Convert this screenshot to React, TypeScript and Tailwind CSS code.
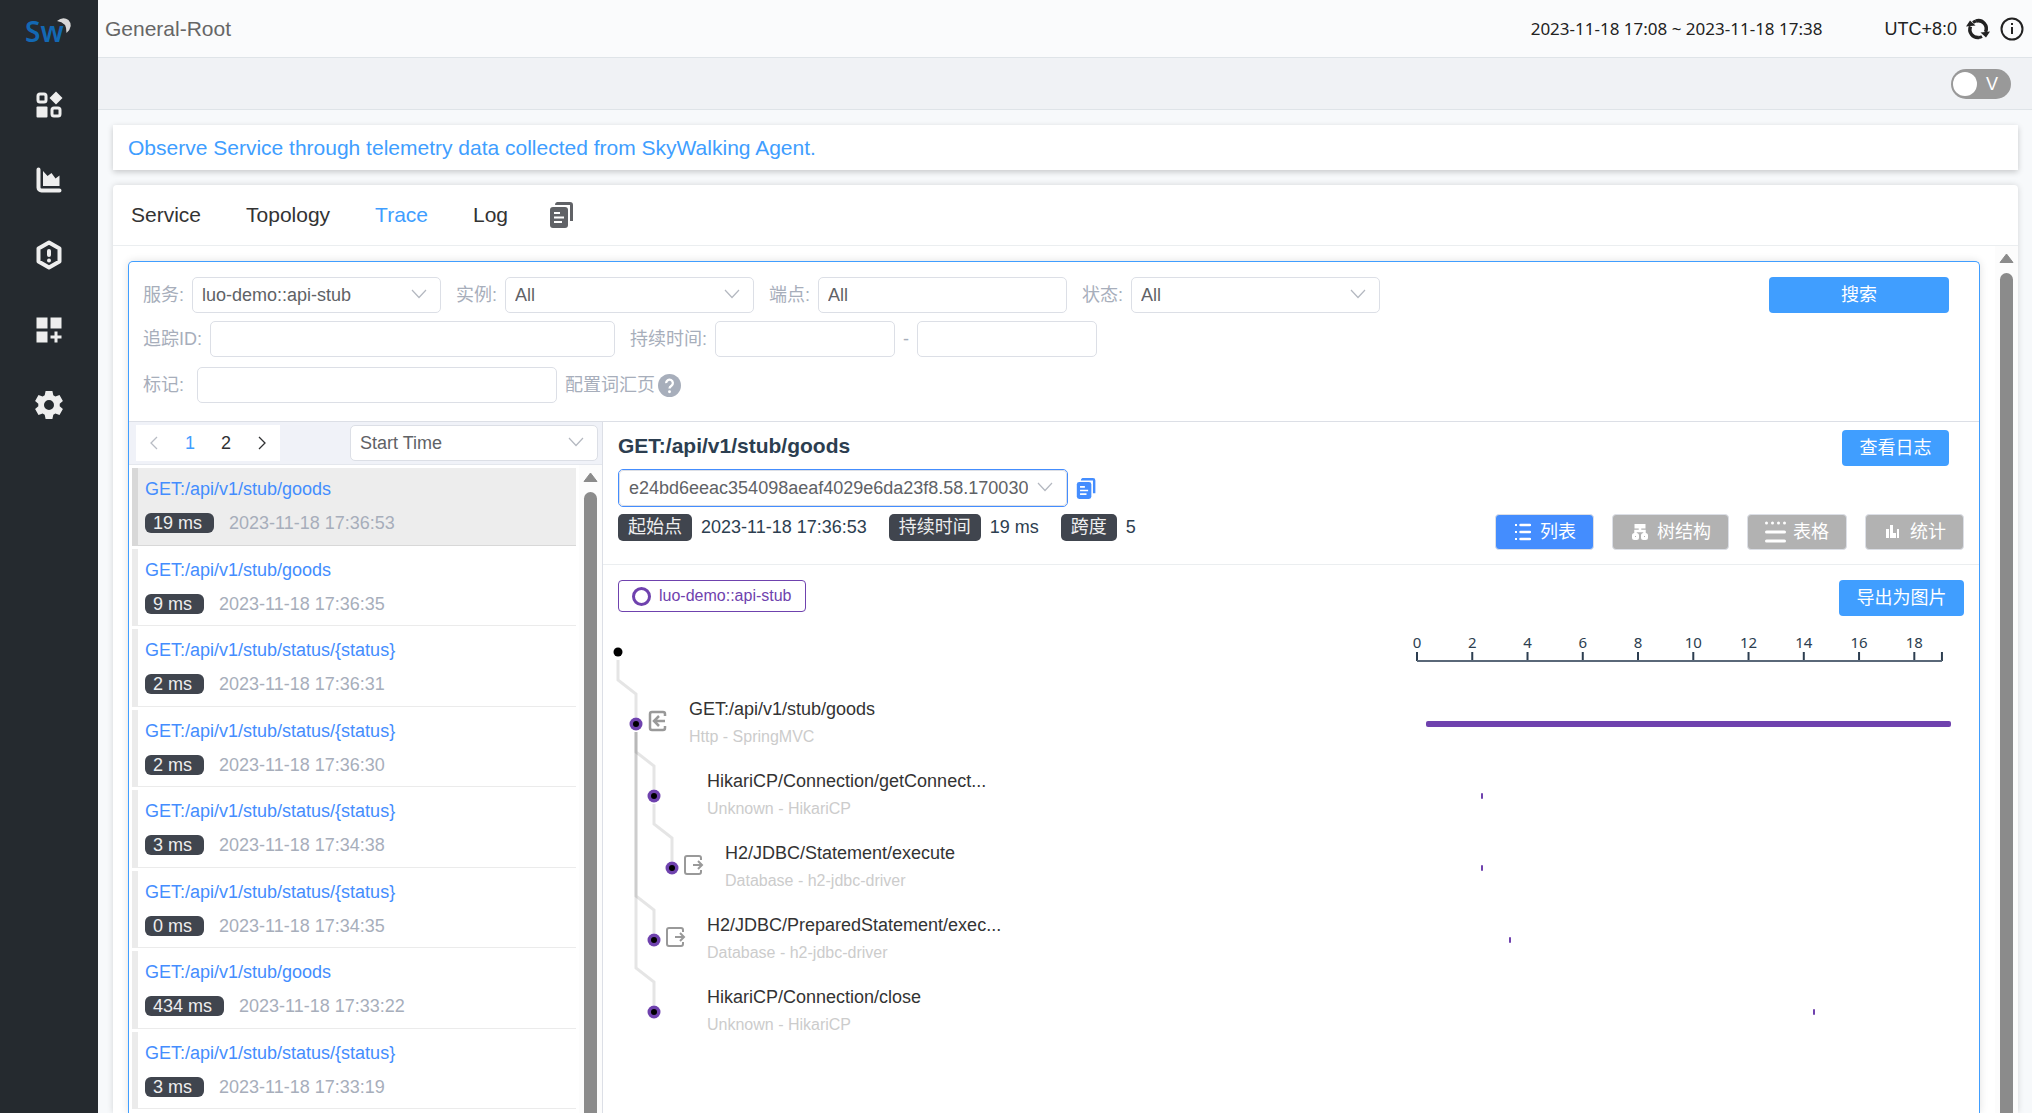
import { useState, type ReactNode } from "react";
import clsx from "clsx";

interface Trace {
  id: number;
  endpoint: string;
  duration: number;
  time: string;
}

interface Span {
  id: number;
  parent: number;
  depth: number;
  label: string;
  layer: string;
  start: number;
  length: number;
  kind?: "entry" | "exit";
}

const TRACES: Trace[] = [
  { id: 1, endpoint: "GET:/api/v1/stub/goods", duration: 19, time: "2023-11-18 17:36:53" },
  { id: 2, endpoint: "GET:/api/v1/stub/goods", duration: 9, time: "2023-11-18 17:36:35" },
  { id: 3, endpoint: "GET:/api/v1/stub/status/{status}", duration: 2, time: "2023-11-18 17:36:31" },
  { id: 4, endpoint: "GET:/api/v1/stub/status/{status}", duration: 2, time: "2023-11-18 17:36:30" },
  { id: 5, endpoint: "GET:/api/v1/stub/status/{status}", duration: 3, time: "2023-11-18 17:34:38" },
  { id: 6, endpoint: "GET:/api/v1/stub/status/{status}", duration: 0, time: "2023-11-18 17:34:35" },
  { id: 7, endpoint: "GET:/api/v1/stub/goods", duration: 434, time: "2023-11-18 17:33:22" },
  { id: 8, endpoint: "GET:/api/v1/stub/status/{status}", duration: 3, time: "2023-11-18 17:33:19" },
];

// parent is the row index of the parent span, 0 is the root dot
const SPANS: Span[] = [
  { id: 1, parent: 0, depth: 1, label: "GET:/api/v1/stub/goods", layer: "Http - SpringMVC", start: 0, length: 19, kind: "entry" },
  { id: 2, parent: 1, depth: 2, label: "HikariCP/Connection/getConnect...", layer: "Unknown - HikariCP", start: 2, length: 0 },
  { id: 3, parent: 2, depth: 3, label: "H2/JDBC/Statement/execute", layer: "Database - h2-jdbc-driver", start: 2, length: 0, kind: "exit" },
  { id: 4, parent: 1, depth: 2, label: "H2/JDBC/PreparedStatement/exec...", layer: "Database - h2-jdbc-driver", start: 3, length: 0, kind: "exit" },
  { id: 5, parent: 1, depth: 2, label: "HikariCP/Connection/close", layer: "Unknown - HikariCP", start: 14, length: 0 },
];

const TOTAL = 19;
const TICKS = [0, 2, 4, 6, 8, 10, 12, 14, 16, 18];
const TABS = ["Service", "Topology", "Trace", "Log"];
const ROW = 72;

export default function App() {
  return (
    <div className="flex h-screen overflow-hidden bg-[#f7f9fb] font-['Liberation_Sans','Noto_Sans_CJK_SC',sans-serif] text-[18px] leading-6 text-[#2c3e50]">
      <Sidebar />
      <div className="flex min-w-0 flex-1 flex-col">
        <Header />
        <div className="flex h-[52px] shrink-0 items-center justify-end border-b border-[#dfe4e8] bg-[#f0f2f5] pr-[21px]">
          <button
            role="switch"
            aria-checked="false"
            aria-label="Edit mode"
            className="flex h-[30px] w-[60px] items-center gap-[9px] rounded-full bg-[#999] pl-[2px] text-white"
          >
            <span className="h-6 w-6 rounded-full bg-white" />V
          </button>
        </div>
        <main className="flex min-h-0 flex-1 flex-col gap-[15px] pt-[15px] pr-[14px] pl-[15px]">
          <div className="flex h-[45px] shrink-0 items-center bg-white px-[15px] text-[21px] text-[#409eff] shadow-[0_2px_6px_#00000033]">
            Observe Service through telemetry data collected from SkyWalking Agent.
          </div>
          <div className="flex min-h-0 flex-1 flex-col rounded-t-[4px] bg-white shadow-[0_0_6px_#00000026]">
            <TabBar />
            <div className="flex min-h-0 flex-1">
              <div className="min-w-0 flex-1 overflow-hidden px-[15px] pt-[15px]">
                <div className="flex h-full flex-col rounded-t-[5px] border border-b-0 border-[#409eff] shadow-[0_0_8px_#0000001f]">
                  <Filters />
                  <div className="flex min-h-0 flex-1">
                    <TraceList />
                    <TraceDetail />
                  </div>
                </div>
              </div>
              <ScrollBar />
            </div>
          </div>
        </main>
      </div>
    </div>
  );
}

function Sidebar() {
  return (
    <nav className="flex w-[98px] shrink-0 flex-col items-center bg-[#252a2f] text-[#eee]">
      <a href="#home" aria-label="SkyWalking" className="mt-[10px] h-10">
        <svg width="50" height="40" viewBox="0 0 50 40" className="overflow-visible">
          <text x="1" y="32" fontFamily="Noto Sans" fontWeight="600" fontSize="28" fill="#1368b3">
            Sw
          </text>
          <path d="M33 11Q39 6 44.500 10Q50 16 42.500 23Q43 12 33 11z" fill="#d8d8d8" />
        </svg>
      </a>
      <div className="mt-[37px] flex flex-col gap-[39px]">
        <NavItem label="Dashboards">
          <rect x="7" y="7" width="8" height="8" rx="2" fill="none" stroke="currentColor" strokeWidth="3" />
          <rect x="21" y="21" width="8" height="8" rx="2" fill="none" stroke="currentColor" strokeWidth="3" />
          <rect x="5.500" y="19.500" width="11" height="11" rx="1" />
          <path d="M25 4.500l6.500 6.500-6.500 6.500-6.500-6.500z" />
        </NavItem>
        <NavItem label="Charts">
          <path
            d="M7.500 7.500v18a3 3 0 0 0 3 3h18"
            fill="none"
            stroke="currentColor"
            strokeWidth="4"
            strokeLinecap="round"
          />
          <path d="M12 24V9l4.500 5 4-3 4 5.500 4-3V24z" />
        </NavItem>
        <NavItem label="Alarms">
          <path
            d="M18 5.500l10.500 6v13L18 30.500l-10.500-6v-13z"
            fill="none"
            stroke="currentColor"
            strokeWidth="4"
            strokeLinejoin="round"
          />
          <rect x="16" y="12" width="4" height="8" rx="2" />
          <circle cx="18" cy="23.500" r="2" />
        </NavItem>
        <NavItem label="New dashboard">
          <path d="M5.500 5.500h11v11h-11zM19.500 5.500h11v11h-11zM5.500 19.500h11v11h-11zM23.500 19.500h3v4h4v3h-4v4h-3v-4h-4v-3h4z" />
        </NavItem>
        <NavItem label="Settings">
          <path
            fillRule="evenodd"
            d="M14.600 4h6.800l.9 4.200 2.100 1.200 4.100-1.300 3.400 5.800-3.200 2.900v2.400l3.200 2.900-3.400 5.800-4.100-1.300-2.100 1.200-.9 4.200h-6.800l-.9-4.200-2.100-1.200-4.100 1.300-3.400-5.800 3.200-2.900v-2.400l-3.200-2.900 3.400-5.800 4.100 1.300 2.100-1.200zM18 13a5 5 0 1 0 0 10 5 5 0 0 0 0-10z"
          />
        </NavItem>
      </div>
    </nav>
  );
}

function NavItem({ label, children }: { label: string; children: ReactNode }) {
  return (
    <a href="#nav" aria-label={label}>
      <svg width="36" height="36" viewBox="0 0 36 36" fill="currentColor">
        {children}
      </svg>
    </a>
  );
}

function Header() {
  return (
    <header className="flex h-[58px] shrink-0 items-center border-b border-[#dfe4e8] bg-[#fafbfc] pr-2 pl-[7px] text-[#222]">
      <h1 className="flex-1 text-[21px] text-[#666]">General-Root</h1>
      <button className="font-['Noto_Sans','Noto_Sans_CJK_SC',sans-serif] text-[17px]">
        2023-11-18 17:08 ~ 2023-11-18 17:38
      </button>
      <span className="ml-[62px]">UTC+8:0</span>
      <button aria-label="Refresh" className="ml-[9px]">
        <svg width="24" height="24" viewBox="0 0 24 24" fill="currentColor">
          <path
            d="M4.500 9.500A8 8 0 0 0 13 20.500M10 4a8 8 0 0 1 9.500 11"
            fill="none"
            stroke="currentColor"
            strokeWidth="3.500"
          />
          <path
            d="M13 20.500a9 9 0 0 0 3-1M7 5.500a9 9 0 0 1 3-1.500"
            fill="none"
            stroke="currentColor"
            strokeWidth="3"
          />
          <path d="M0 9.500l4-6 5.500 5zM24 14.500l-4 6-5.500-5z" />
        </svg>
      </button>
      <button aria-label="Version" className="ml-[10px]">
        <svg width="24" height="24" viewBox="0 0 24 24" fill="currentColor">
          <circle cx="12" cy="12" r="10.500" fill="none" stroke="currentColor" strokeWidth="2" />
          <path d="M11 10h2v7h-2zM11 6h2v2h-2z" />
        </svg>
      </button>
    </header>
  );
}

function TabBar() {
  const [active, setActive] = useState("Trace");
  return (
    <div className="flex h-[61px] shrink-0 items-center gap-[45px] border-b border-[#ebeef0] pl-[18px] text-[21px] text-[#333]">
      {TABS.map((tab) => (
        <button
          key={tab}
          onClick={() => setActive(tab)}
          className={clsx(tab === active && "text-[#409eff]")}
        >
          {tab}
        </button>
      ))}
      <button aria-label="Copy tabs" className="-ml-1 text-[#606266]">
        <CopyIcon size={26} />
      </button>
    </div>
  );
}

function Filters() {
  return (
    <form className="flex shrink-0 items-start justify-between border-b border-[#dcdfe6] pt-[15px] pr-[30px] pb-[18px] pl-[14px] text-[#a7aebb]">
      <div className="flex flex-col">
        <div className="flex gap-[15px]">
          <Field label="服务:">
            <Select label="服务" value="luo-demo::api-stub" />
          </Field>
          <Field label="实例:">
            <Select label="实例" value="All" />
          </Field>
          <Field label="端点:">
            <TextInput label="端点" value="All" className="w-[249px]" />
          </Field>
          <Field label="状态:">
            <Select label="状态" value="All" />
          </Field>
        </div>
        <div className="mt-2 flex gap-[15px]">
          <Field label="追踪ID:">
            <TextInput label="追踪ID" className="w-[405px]" />
          </Field>
          <Field label="持续时间:">
            <TextInput label="最小持续时间" className="w-[180px]" />
            <span>-</span>
            <TextInput label="最大持续时间" className="w-[180px]" />
          </Field>
        </div>
        <div className="mt-[10px] flex items-center">
          <label htmlFor="tag-input">标记:</label>
          <input
            id="tag-input"
            className="ml-[13px] h-9 w-[360px] rounded-[5px] border border-[#dcdfe6] px-[9px] outline-none"
          />
          <a href="#vocabulary" className="ml-2 flex items-center gap-[3px]">
            配置词汇页
            <svg width="23" height="23" viewBox="0 0 24 24">
              <circle cx="12" cy="12" r="12" fill="#a7aebb" />
              <path
                d="M8.500 9.500a3.500 3.500 0 1 1 5.500 2.800c-1.300.9-2 1.500-2 2.900"
                fill="none"
                stroke="#fff"
                strokeWidth="2.400"
              />
              <circle cx="12" cy="18.500" r="1.500" fill="#fff" />
            </svg>
          </a>
        </div>
      </div>
      <button type="button" className="h-9 w-[180px] rounded-[4px] bg-[#409eff] text-white">
        搜索
      </button>
    </form>
  );
}

function Field({ label, children }: { label: string; children: ReactNode }) {
  return (
    <div className="flex items-center gap-2">
      <span>{label}</span>
      {children}
    </div>
  );
}

function TextInput({
  label,
  value,
  className,
}: {
  label: string;
  value?: string;
  className: string;
}) {
  return (
    <input
      aria-label={label}
      defaultValue={value}
      className={clsx(
        "h-9 rounded-[5px] border border-[#dcdfe6] bg-white px-[9px] text-[#606266] outline-none",
        className
      )}
    />
  );
}

function Select({ label, value, className }: { label: string; value: string; className?: string }) {
  return (
    <div className={clsx("relative h-9", className ?? "w-[249px]")}>
      <select
        aria-label={label}
        className="h-full w-full appearance-none rounded-[5px] border border-[#dcdfe6] bg-white pr-9 pl-[9px] text-[#606266] outline-none"
      >
        <option>{value}</option>
      </select>
      <Chevron />
    </div>
  );
}

function Chevron() {
  return (
    <svg
      width="16"
      height="10"
      viewBox="0 0 16 10"
      className="pointer-events-none absolute top-3 right-[14px]"
    >
      <path d="M1 1l7 7.500L15 1" fill="none" stroke="#b4b8c0" strokeWidth="1.200" />
    </svg>
  );
}

function TraceList() {
  const [selected, setSelected] = useState(1);
  return (
    <section className="flex w-[474px] shrink-0 flex-col border-r border-[#dcdfe6]">
      <div className="flex h-[43px] shrink-0 items-start justify-between border-b border-[#e4e7ed] bg-[#f0f2f8] pt-[3px] pr-[4px] pl-[7px]">
        <div className="flex h-9 bg-white text-[#303133]">
          <button aria-label="Previous page" disabled className="flex w-9 items-center justify-center text-[#b8bcc4]">
            <PageArrow d="M8 1L2 7l6 6" />
          </button>
          <button className="w-9 text-[#409eff]">1</button>
          <button className="w-9">2</button>
          <button aria-label="Next page" className="flex w-9 items-center justify-center">
            <PageArrow d="M2 1l6 6-6 6" />
          </button>
        </div>
        <Select label="排序" value="Start Time" className="w-[248px]" />
      </div>
      <div className="flex min-h-0 flex-1">
        <ul className="flex min-w-0 flex-1 flex-col gap-[3px] overflow-hidden pt-[3px] pl-[3px]">
          {TRACES.map((trace) => (
            <li
              key={trace.id}
              onClick={() => setSelected(trace.id)}
              className={clsx(
                "shrink-0 border-b border-l-[6px] pt-[9px] pl-[7px] odd:h-[78px] even:h-[77px]",
                trace.id === selected
                  ? "border-b-[#d8d8d8] border-l-[#d8d8d8] bg-[#ededed]"
                  : "border-b-[#ebebeb] border-l-[#ebebeb]"
              )}
            >
              <a href="#trace" className="block text-[#448dfe]">
                {trace.endpoint}
              </a>
              <div className="mt-3 flex gap-[15px] leading-5">
                <span className="rounded-[6px] bg-[#40454e] pr-3 pl-2 text-[#eee]">
                  {trace.duration} ms
                </span>
                <span className="text-[#a7aebb]">{trace.time}</span>
              </div>
            </li>
          ))}
        </ul>
        <div className="ml-[3px]">
          <ScrollBar />
        </div>
      </div>
    </section>
  );
}

function PageArrow({ d }: { d: string }) {
  return (
    <svg width="10" height="14" viewBox="0 0 10 14">
      <path d={d} fill="none" stroke="currentColor" strokeWidth="1.300" />
    </svg>
  );
}

function ScrollBar() {
  return (
    <div className="flex h-full w-[23px] flex-col items-center bg-[#fcfcfc] pt-[7px]" aria-hidden="true">
      <svg width="15" height="10" viewBox="0 0 15 10">
        <path d="M7.500 1L14 9.500H1z" fill="#8b8b8b" stroke="#8b8b8b" strokeLinejoin="round" />
      </svg>
      <div className="mt-[10px] w-[13px] flex-1 rounded-t-full bg-[#8b8b8b]" />
    </div>
  );
}

function TraceDetail() {
  return (
    <section className="flex min-w-0 flex-1 flex-col">
      <div className="shrink-0 border-b border-[#ebeef0] px-[15px] pt-2 pb-[14px]">
        <div className="flex items-start justify-between pr-[15px]">
          <h2 className="text-[21px] leading-8 font-bold">GET:/api/v1/stub/goods</h2>
          <button className="h-9 w-[107px] rounded-[4px] bg-[#409eff] text-white">查看日志</button>
        </div>
        <div className="mt-[3px] flex items-center gap-2">
          <div className="relative h-[38px] w-[450px] rounded-[5px] border border-[#448dfe]">
            <select
              aria-label="追踪ID"
              className="h-full w-full appearance-none rounded-[4px] border border-[#dcdfe6] bg-white pr-[38px] pl-[9px] text-[#606266] outline-none"
            >
              <option>e24bd6eeac354098aeaf4029e6da23f8.58.170030</option>
            </select>
            <Chevron />
          </div>
          <button aria-label="Copy trace id" className="text-[#448dfe]">
            <CopyIcon size={21} />
          </button>
        </div>
        <div className="mt-[7px] flex items-start justify-between">
          <dl className="flex leading-[27px]">
            <Stat label="起始点" value="2023-11-18 17:36:53" />
            <Stat label="持续时间" value="19 ms" />
            <Stat label="跨度" value="5" />
          </dl>
          <ViewSwitch />
        </div>
      </div>
      <div className="px-[15px] pt-[15px]">
        <div className="flex items-start justify-between">
          <span className="flex h-8 items-center gap-2 rounded-[4px] border border-[#6f42ae] px-[13px] text-[16px] text-[#6f42ae]">
            <span className="h-[19px] w-[19px] rounded-full border-[3px] border-[#6f42ae]" />
            luo-demo::api-stub
          </span>
          <button className="h-9 w-[125px] rounded-[4px] bg-[#409eff] text-white">导出为图片</button>
        </div>
        <SpanTree />
      </div>
    </section>
  );
}

function Stat({ label, value }: { label: string; value: string }) {
  return (
    <div className="mr-[22px] flex gap-[9px]">
      <dt className="rounded-[5px] bg-[#40454e] px-[10px] text-[#eee]">{label}</dt>
      <dd>{value}</dd>
    </div>
  );
}

const VIEWS = [
  {
    name: "列表",
    icon: (
      <svg width="16" height="18" viewBox="0 0 16 18" fill="currentColor">
        <path d="M0 1h2v2H0zM0 8h2v2H0zM0 15h2v2H0z" />
        <path d="M5.500 2H15M5.500 9H15M5.500 16H15" stroke="currentColor" strokeWidth="2.500" strokeLinecap="round" />
      </svg>
    ),
  },
  {
    name: "树结构",
    icon: (
      <svg width="16" height="18" viewBox="0 0 16 18">
        <path d="M2.500 1h11v4.500h-11z" fill="currentColor" />
        <path d="M8 5v4M3.500 11V8h9v3" fill="none" stroke="currentColor" strokeWidth="2.500" />
        <rect x="1.500" y="11.500" width="4" height="4" rx="1" fill="none" stroke="currentColor" strokeWidth="3" />
        <rect x="10.500" y="11.500" width="4" height="4" rx="1" fill="none" stroke="currentColor" strokeWidth="3" />
      </svg>
    ),
  },
  {
    name: "表格",
    icon: (
      <svg width="21" height="22" viewBox="0 0 21 22" fill="currentColor">
        <circle cx="1.500" cy="2" r="1.500" />
        <circle cx="7.500" cy="2" r="1.500" />
        <circle cx="13.500" cy="2" r="1.500" />
        <circle cx="19.500" cy="2" r="1.500" />
        <path d="M1.500 11h18M1.500 20h18" stroke="currentColor" strokeWidth="3" strokeLinecap="round" />
      </svg>
    ),
  },
  {
    name: "统计",
    icon: (
      <svg width="16" height="18" viewBox="0 0 16 18" fill="currentColor">
        <path d="M1 6h3v9H1zM5 2h3v13H5zM8 10h3v5H8zM12 6h2v9h-2z" />
      </svg>
    ),
  },
];

function ViewSwitch() {
  const [view, setView] = useState("列表");
  return (
    <div className="flex gap-[18px]">
      {VIEWS.map(({ name, icon }) => (
        <button
          key={name}
          onClick={() => setView(name)}
          className={clsx(
            "flex h-9 items-center rounded-[4px] border border-[#dcdfe6] pr-[17px] text-white",
            name === "表格" ? "gap-[7px] pl-[17px]" : "gap-[9px] pl-[19px]",
            name === view ? "bg-[#448dfe]" : "bg-[#b2b2b2]"
          )}
        >
          {icon}
          {name}
        </button>
      ))}
    </div>
  );
}

function SpanTree() {
  return (
    <div className="relative">
      <TreeLines />
      <div className="flex h-[72px] justify-end">
        <TimeAxis />
      </div>
      {SPANS.map((span) => (
        <SpanRow key={span.id} span={span} />
      ))}
    </div>
  );
}

// Dots and elbow connectors, one 18px indent per depth level
function TreeLines() {
  const nodeX = (depth: number) => 8 + depth * 18;
  const nodeY = (row: number) => ROW / 2 + row * ROW;
  const depthOf = (row: number) => (row === 0 ? 0 : SPANS[row - 1].depth);

  return (
    <svg width="110" height="432" viewBox="0 0 110 432" className="absolute top-0 -left-2">
      {SPANS.map((span) => {
        const px = nodeX(depthOf(span.parent));
        const x = nodeX(span.depth);
        const y = nodeY(span.id);
        return (
          <path
            key={span.id}
            d={`M${px} ${nodeY(span.parent) + 8}V${y - 44}L${x} ${y - 30}V${y - 7}`}
            fill="none"
            stroke="#000"
            strokeOpacity="0.1"
            strokeWidth="3"
          />
        );
      })}
      <circle cx={nodeX(0)} cy={nodeY(0)} r="4.500" />
      {SPANS.map((span) => (
        <g key={span.id}>
          <circle cx={nodeX(span.depth)} cy={nodeY(span.id)} r="6.500" fill="#6f42ae" />
          <circle cx={nodeX(span.depth)} cy={nodeY(span.id)} r="3" />
          {span.kind && (
            <g
              transform={`translate(${nodeX(span.depth) + 12} ${nodeY(span.id) - 13})`}
              fill="none"
              stroke="#999"
              strokeWidth="2"
            >
              {span.kind === "entry" ? (
                <path
                  d="M17 5V3q0-2-2-2H4Q2 1 2 3v14q0 2 2 2h11q2 0 2-2v-2M17 10H7M11 5l-5 5 5 5"
                  strokeWidth="2.500"
                />
              ) : (
                <path d="M17 5V3q0-2-2-2H3Q1 1 1 3v14q0 2 2 2h12q2 0 2-2v-2M9 10h9M14 6l4 4-4 4" />
              )}
            </g>
          )}
        </g>
      ))}
    </svg>
  );
}

function TimeAxis() {
  return (
    <svg width="39%" height="72" className="mr-[22px] overflow-visible" fill="#2c3e50">
      {TICKS.map((tick) => (
        <text
          key={tick}
          x={`${(tick / TOTAL) * 100}%`}
          y="32"
          textAnchor="middle"
          fontSize="15"
          fontFamily="Noto Sans"
        >
          {tick}
        </text>
      ))}
      {[...TICKS, TOTAL].map((tick) => {
        const x = `${(tick / TOTAL) * 100}%`;
        return <line key={tick} x1={x} x2={x} y1="36" y2="45" stroke="#2c3e50" strokeWidth="2" />;
      })}
      <line x1="0" x2="100%" y1="45" y2="45" stroke="#5a6878" strokeWidth="2" />
    </svg>
  );
}

function SpanRow({ span }: { span: Span }) {
  return (
    <div className="flex h-[72px] justify-between">
      <div className="pt-[9px]" style={{ paddingLeft: 53 + span.depth * 18 }}>
        <div className="text-[#333]">{span.label}</div>
        <div className="mt-[6px] text-[16px] leading-5 text-[#ccc]">{span.layer}</div>
      </div>
      <div className="mr-[13px] flex w-[39%] items-center">
        <div
          className="h-[6px] min-w-[2px] rounded-[2px] bg-[#6f42ae]"
          style={{
            marginLeft: `${(span.start / TOTAL) * 100}%`,
            width: `${(span.length / TOTAL) * 100}%`,
          }}
        />
      </div>
    </div>
  );
}

function CopyIcon({ size }: { size: number }) {
  return (
    <svg width={size} height={size} viewBox="0 0 26 26" fill="currentColor">
      <path d="M8 0h13a3 3 0 0 1 3 3v16h-3V3H6a3 3 0 0 1 2-3z" />
      <rect x="1" y="5" width="18" height="21" rx="3" />
      <path d="M5 11h6M5 15.500h10M5 20h8" stroke="#fff" strokeWidth="2" />
    </svg>
  );
}
